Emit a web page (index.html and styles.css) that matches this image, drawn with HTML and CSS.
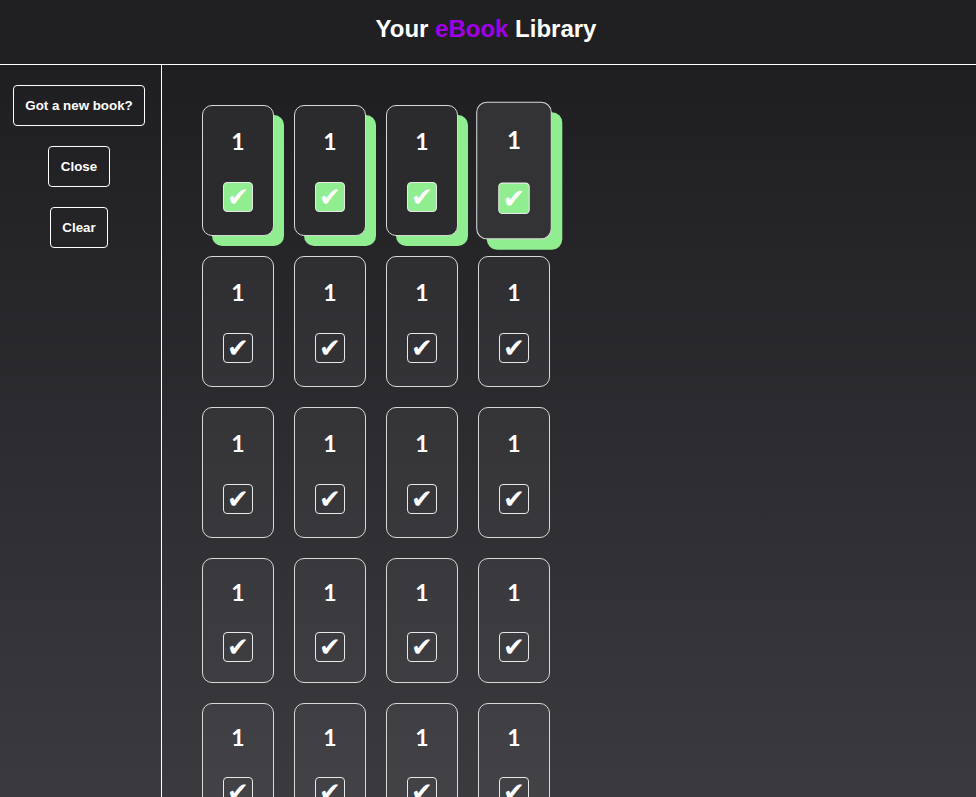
FILE: index.html
```html
<!DOCTYPE html>
<html lang="en">
<head>
<meta charset="utf-8">
<title>Your eBook Library</title>
<link rel="stylesheet" href="styles.css">
</head>
<body>
<header class="top">
  <h1 class="title">Your <span class="accent">eBook</span> Library</h1>
</header>
<div class="layout">
  <aside class="side">
    <button class="btn">Got a new book?</button>
    <button class="btn">Close</button>
    <button class="btn">Clear</button>
  </aside>
  <main class="shelf">
    <div class="card read"><span class="num">1</span><span class="box">✔</span></div>
    <div class="card read"><span class="num">1</span><span class="box">✔</span></div>
    <div class="card read"><span class="num">1</span><span class="box">✔</span></div>
    <div class="card read hover"><span class="num">1</span><span class="box">✔</span></div>

    <div class="card"><span class="num">1</span><span class="box">✔</span></div>
    <div class="card"><span class="num">1</span><span class="box">✔</span></div>
    <div class="card"><span class="num">1</span><span class="box">✔</span></div>
    <div class="card"><span class="num">1</span><span class="box">✔</span></div>

    <div class="card"><span class="num">1</span><span class="box">✔</span></div>
    <div class="card"><span class="num">1</span><span class="box">✔</span></div>
    <div class="card"><span class="num">1</span><span class="box">✔</span></div>
    <div class="card"><span class="num">1</span><span class="box">✔</span></div>

    <div class="card short"><span class="num">1</span><span class="box">✔</span></div>
    <div class="card short"><span class="num">1</span><span class="box">✔</span></div>
    <div class="card short"><span class="num">1</span><span class="box">✔</span></div>
    <div class="card short"><span class="num">1</span><span class="box">✔</span></div>

    <div class="card short"><span class="num">1</span><span class="box">✔</span></div>
    <div class="card short"><span class="num">1</span><span class="box">✔</span></div>
    <div class="card short"><span class="num">1</span><span class="box">✔</span></div>
    <div class="card short"><span class="num">1</span><span class="box">✔</span></div>
  </main>
</div>
</body>
</html>
```
FILE: styles.css
```css
html, body {
  margin: 0;
  padding: 0;
}
body {
  min-height: 100vh;
  background: linear-gradient(180deg, #1c1c1f 0%, #3b3b40 100%);
  color: #fff;
  font-family: "Liberation Sans", Arial, sans-serif;
  overflow: hidden;
}
.top {
  height: 65px;
  box-sizing: border-box;
  padding: 15px 4px 0 0;
  background: #202023;
  border-bottom: 1px solid #fff;
  text-align: center;
}
.title {
  margin: 0;
  font-size: 24px;
  line-height: 27px;
  font-weight: bold;
  color: #fff;
}
.accent {
  color: #a000e8;
}
.layout {
  display: flex;
  min-height: calc(100vh - 65px);
}
.side {
  width: 158px;
  padding: 20px 3px 0 0;
  border-right: 1px solid #fff;
  display: flex;
  flex-direction: column;
  align-items: center;
  gap: 20px;
  flex-shrink: 0;
}
.btn {
  background: transparent;
  color: #fff;
  border: 1px solid #fff;
  border-radius: 4px;
  font-family: "Liberation Sans", Arial, sans-serif;
  font-weight: bold;
  font-size: 13.333px;
  line-height: 15px;
  padding: 12px 11.5px;
  margin: 0;
}
.shelf {
  padding: 40px 0 0 40px;
  display: grid;
  grid-template-columns: repeat(4, 72px);
  column-gap: 20px;
  row-gap: 20px;
  align-content: start;
}
.card {
  box-sizing: border-box;
  width: 72px;
  height: 131px;
  border: 1px solid #d8d8d8;
  border-radius: 10px;
  background: rgba(255, 255, 255, 0.045);
  display: flex;
  flex-direction: column;
  align-items: center;
  padding-top: 22px;
}
.card.read {
  background: #2b2b2e;
  box-shadow: 10px 10px 0 #90ee90;
}
.card.hover {
  transform: scale(1.05);
  background: #333336;
}
.num {
  font-family: Lato, "DejaVu Sans", sans-serif;
  font-weight: bold;
  font-size: 23px;
  line-height: 26px;
  color: #fff;
}
.box {
  box-sizing: border-box;
  width: 30px;
  height: 30px;
  margin-top: 28px;
  border: 1px solid #e8e8e8;
  border-radius: 4px;
  display: flex;
  align-items: center;
  justify-content: center;
  font-family: "DejaVu Sans", sans-serif;
  font-size: 26px;
  line-height: 28px;
  color: #fff;
}
.card.read .box {
  background: #90ee90;
}
.card.short {
  height: 125px;
  padding-top: 20px;
}
.card.short .box {
  margin-top: 27px;
}
```
